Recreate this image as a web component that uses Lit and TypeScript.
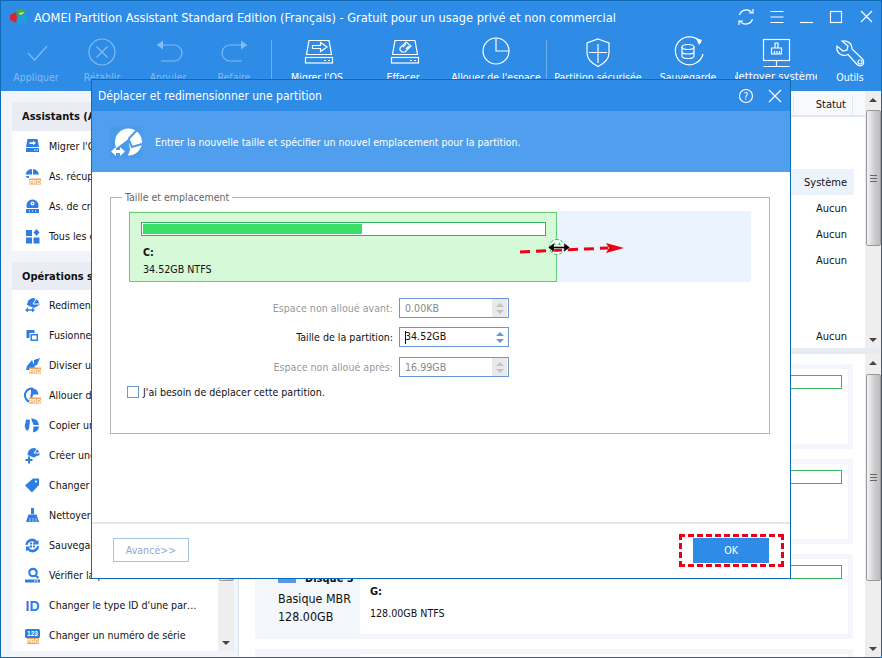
import { LitElement, html, css, svg } from "lit";
import { customElement } from "lit/decorators.js";

const pro = svg`<rect x="5" y="10.5" width="12" height="6" fill="#f4a460"/><text x="11" y="15.6" font-size="5.4" font-weight="700" fill="#fff" text-anchor="middle" font-family="'Liberation Sans',sans-serif">PRO</text>`;
const B = "#2f7de1";

const sideIcons: Record<string, unknown> = {
  migrate: svg`<path d="M3.5 1h10l1.5 8H2z" fill="${B}"/><path d="M5.5 4.2h3.6V2.8L12 5l-2.900 2.200V5.900H5.500z" fill="#fff"/><rect x="2" y="10" width="13" height="4" fill="${B}"/><path d="M10 12h1.500M12.500 12H14" stroke="#fff"/>`,
  recover: svg`<path d="M8 1a7 7 0 0 0-6.500 5.500H8zM9 1a7 7 0 0 1 6 5.500H9zM1.500 8H5v2H3.500z" fill="${B}"/>${pro}`,
  cd: svg`<path d="M3 10a6 6 0 1 1 11 0z" fill="${B}"/><circle cx="8.500" cy="5.500" r="2" fill="#fff"/><circle cx="8.500" cy="5.500" r=".8" fill="${B}"/><rect x="2" y="11" width="13" height="4" fill="${B}"/><path d="M5 13h1M8 13h1M11 13h1" stroke="#fff"/>`,
  tools: svg`<rect x="2" y="2" width="6" height="6" fill="${B}"/><rect x="2" y="9.500" width="6" height="6" fill="${B}"/><rect x="9.500" y="9.500" width="6" height="6" fill="${B}"/><path d="M12.500 1l3 3.500-3 3.500-3-3.500z" fill="${B}"/>`,
  resize: svg`<path d="M9 1a7 7 0 0 1 6.500 7L10 11 3 8a7 7 0 0 1 6-7z" fill="${B}"/><path d="M9 7l3-5M9 7h6" stroke="#fff"/><path d="M1 13l3-2.500v1.700h4v-1.700l3 2.500-3 2.500v-1.700H4v1.700z" fill="${B}"/>`,
  merge: svg`<rect x="2.500" y="3" width="8" height="8" fill="${B}"/><rect x="6" y="6.500" width="8.500" height="8" fill="${B}" stroke="#fff"/><rect x="8" y="8.500" width="4.500" height="4" fill="#fff"/>`,
  split: svg`<path d="M10 3l6-2-3 7-3 1zM3 9l5-6 3 7-3 3H2z" fill="${B}"/>${pro}`,
  alloc: svg`<path d="M8 1.500a6.800 6.800 0 1 0 5.500 10.500H7.500V8H8z" fill="none" stroke="${B}" stroke-width="2"/><path d="M9 1.500a6 6 0 0 1 5.500 6H9z" fill="${B}"/>${pro}`,
  copy: svg`<path d="M5 2.500A7 7 0 0 0 3 14l2-2 1-9z" fill="${B}"/><path d="M7 1.500A7 7 0 0 1 15 8H9.500zM9.500 9.500H15A7 7 0 0 1 9 15.500z" fill="${B}"/><path d="M1 5l2-3 2 2" fill="${B}"/>`,
  create: svg`<path d="M10 1a6.500 6.500 0 0 1 5.500 7l-6 2.500L3.500 8A6.500 6.500 0 0 1 10 1z" fill="${B}"/><path d="M10 6l3-4M10 6h5.500" stroke="#fff"/><path d="M4 9.500h2v2.500h2.500v2H6v2.500H4V14H1.500v-2H4z" fill="${B}"/>`,
  label: svg`<path d="M9 1.500h6v6.500l-7 7.500-7-7z" fill="${B}"/><circle cx="12" cy="4.500" r="1.100" fill="#fff"/>`,
  wipe: svg`<rect x="7" y="1" width="3" height="6" fill="${B}"/><path d="M4.500 7.500h8L15 15H2z" fill="${B}"/><path d="M6 11v4M9 11v4M12 11v4" stroke="#fff" stroke-width=".6"/>`,
  backup: svg`<path d="M1.500 8A6.500 6.500 0 0 1 13 4l1.500-1v4.500H10l1.500-1.500A4.500 4.500 0 0 0 3.500 8zM15 9A6.500 6.500 0 0 1 3.500 13L2 14.500V9.500h4.500L5 11a4.500 4.500 0 0 0 8-2z" fill="${B}"/><path d="M6 5.500h2v2H6zM9 5.500h2v2H9zM6 8.500h2v2H6zM9 8.500h2v2H9z" fill="${B}"/>`,
  check: svg`<circle cx="9" cy="5.500" r="3.700" fill="none" stroke="${B}" stroke-width="2.200"/><path d="M11.500 8.500l3 2.500" stroke="${B}" stroke-width="2.200"/><rect x="1" y="12.500" width="15" height="3" fill="${B}"/><path d="M10 14h1.500M12.500 14H14" stroke="#fff"/>`,
  id: svg`<text x="8.500" y="14" font-size="14" font-weight="700" fill="${B}" text-anchor="middle" font-family="'Liberation Sans',sans-serif">ID</text>`,
  serial: svg`<rect x="1" y="2" width="15" height="9" rx="1.500" fill="${B}"/><text x="8.500" y="9.300" font-size="6.500" font-weight="700" fill="#fff" text-anchor="middle" font-family="'Liberation Sans',sans-serif">123</text><rect x="3" y="11" width="12" height="6" fill="#f4a460"/><text x="9" y="16" font-size="5.400" font-weight="700" fill="#fff" text-anchor="middle" font-family="'Liberation Sans',sans-serif">PRO</text>`,
};

const tbIcons: Record<string, unknown> = {
  apply: svg`<path d="M14 22l6.500 7L33 15"/>`,
  undo_x: svg`<circle cx="22" cy="21" r="13"/><path d="M16.500 15.500l11 11M27.500 15.500l-11 11"/>`,
  undo: svg`<path d="M11 14h17a8 8 0 0 1 0 16H15"/><path d="M17 9.500l-6 4.500 6 4.500z" fill="currentColor" stroke="none"/>`,
  redo: svg`<path d="M35 14H18a8 8 0 0 0 0 16h12"/><path d="M29 9.500l6 4.500-6 4.500z" fill="currentColor" stroke="none"/>`,
  mig: svg`<path d="M14 9.500h20l2.500 14H11.500z"/><rect x="10.500" y="26.500" width="27" height="5.500"/><path d="M29 29.500h2M33 29.500h2"/><path d="M17.500 14.500h8v-3l6.500 4.500-6.500 4.500v-3h-8z"/>`,
  wipe: svg`<path d="M14 9.500h20l2.500 14H11.500z"/><rect x="10.500" y="26.500" width="27" height="5.500"/><path d="M29 29.500h2M33 29.500h2"/><path d="M19 17l6-6 5 4-6 6h-3l-2-2zM22 16l3-3M25 18l3-3"/>`,
  alloc: svg`<circle cx="22" cy="20" r="13"/><path d="M22 7v13h13"/>`,
  shield: svg`<path d="M22 8l11 4v10c0 7-6 11-11 13.500C17 33 11 29 11 22V12z"/><path d="M22 13v19M13 21.500h18"/>`,
  backup: svg`<path d="M35 12a14 14 0 1 0 2 11"/><path d="M30 7l6 2-3 5z" fill="#fff" stroke="none"/><ellipse cx="22" cy="16" rx="6" ry="2.500"/><path d="M16 16v9c0 3.300 12 3.300 12 0v-9M16 20.500c0 3.300 12 3.300 12 0"/>`,
  clean: svg`<rect x="9.500" y="8.500" width="26" height="21"/><path d="M22.500 29.500V35M9.500 35.500h26"/><path d="M21 12h3v5h-3zM17.500 17h10v6h-10zM20.500 23v-3M23 23v-3M25.500 23v-3"/>`,
  tools: svg`<path d="M14 10l6 5-1 4-4 1-6-5c-1 5 2 9.500 8 9.500l3-1 9 10c1.500 1.500 5 2 6 0s1-4-1-6L24 18c0-5.500-4.500-9-10-8z"/><circle cx="32" cy="31" r="2"/>`,
};

const tools = [
  { l: "Appliquer", i: "apply", w: 66, off: true },
  { l: "Rétablir", i: "undo_x", w: 66, off: true },
  { l: "Annuler", i: "undo", w: 66, off: true },
  { l: "Refaire", i: "redo", w: 66, off: true, sep: true },
  { l: "Migrer l'OS", i: "mig", w: 84 },
  { l: "Effacer", i: "wipe", w: 88 },
  { l: "Allouer de l'espace", i: "alloc", w: 98, sep: true },
  { l: "Partition sécurisée", i: "shield", w: 102 },
  { l: "Sauvegarde", i: "backup", w: 78 },
  { l: "Nettoyer système", i: "clean", w: 98, clip: true },
  { l: "Outils", i: "tools", w: 50 },
];

const wizards = [
  ["migrate", "Migrer l'OS vers disque SSD"],
  ["recover", "As. récupération de partition"],
  ["cd", "As. de création de CD bootable"],
  ["tools", "Tous les outils"],
];
const ops = [
  ["resize", "Redimensionner la partition"],
  ["merge", "Fusionner les partitions"],
  ["split", "Diviser une partition"],
  ["alloc", "Allouer de l'espace libre"],
  ["copy", "Copier une partition"],
  ["create", "Créer une partition"],
  ["label", "Changer la lettre de lecteur"],
  ["wipe", "Nettoyer la partition"],
  ["backup", "Sauvegarder la partition"],
  ["check", "Vérifier la partition"],
  ["id", "Changer le type ID d'une par…"],
  ["serial", "Changer un numéro de série"],
];
const rows = [
  { s: "", h: 26 }, { s: "", h: 26 },
  { s: "Système", h: 26, hl: true },
  { s: "Aucun", h: 26 }, { s: "Aucun", h: 26 }, { s: "Aucun", h: 26 },
  { s: "", h: 26 }, { s: "", h: 24 },
  { s: "Aucun", h: 26 },
];
const disks = [
  { n: "Disque 1", k: "Basique MBR", z: "60.00GB", p: "C:", d: "34.52GB NTFS" },
  { n: "Disque 2", k: "Basique MBR", z: "128.00GB", p: "F:", d: "128.00GB NTFS" },
  { n: "Disque 3", k: "Basique MBR", z: "128.00GB", p: "G:", d: "128.00GB NTFS" },
  { n: "Disque 4", k: "Basique MBR", z: "128.00GB", p: "H:", d: "128.00GB NTFS" },
];

@customElement("app-root")
export class AppRoot extends LitElement {
  static styles = css`
    :host { display: block; width: 882px; height: 658px; font-family: "DejaVu Sans Condensed", "Liberation Sans", sans-serif; font-size: 10.6px; color: #111; }
    * { box-sizing: border-box; }
    .win { position: relative; width: 882px; height: 658px; border: 1px solid #0f6ab5; background: #f1f5fb; overflow: hidden; display: flex; flex-direction: column; }
    .head { height: 90px; background: #2e8be6; color: #fff; flex: none; }
    .titlebar { height: 32px; display: flex; align-items: center; padding-left: 7px; }
    .app-title { margin-left: 6px; font-size: 12.7px; flex: 1; white-space: nowrap; }
    .wctl { display: flex; align-items: center; }
    .wctl svg { display: block; fill: none; stroke: #fff; stroke-width: 1.2; }
    .c-menu { margin-left: 13px; }
    .c-min, .c-max { margin-left: 15px; }
    .c-close { margin-left: 17px; margin-right: 7px; }
    .toolbar { display: flex; padding-left: 2px; height: 58px; }
    .tool { flex: none; display: flex; flex-direction: column; align-items: center; color: #fff; overflow: hidden; white-space: nowrap; }
    .tool.off { color: #82bcf2; }
    .tool svg { width: 44px; height: 44px; fill: none; stroke: currentColor; stroke-width: 1.2; flex: none; margin: -2px 0 -8px; }
    .tool span { font-size: 10.5px; line-height: 16px; margin-top: 2px; }
    .tool.clip { margin: 0 8px; }
    .tool.clip span { font-size: 11.2px; }
    .sep { flex: none; width: 1px; height: 40px; margin: 7px 3px 0 4px; background: #6fb0ef; }
    .sep.b { margin: 7px 0 0 1px; }

    .content { flex: 1; display: flex; min-height: 0; }
    .side { width: 238px; flex: none; padding: 11px 4px 6px 11px; border-right: 1px solid #dce3ee; display: flex; flex-direction: column; gap: 11px; }
    .panel { background: #fff; }
    .panel-b { flex: 1; min-height: 0; display: flex; flex-direction: column; }
    .ph { height: 29px; background: #e9edf3; font-weight: 700; font-size: 11px; display: flex; align-items: center; padding-left: 10px; white-space: nowrap; overflow: hidden; }
    .panel-b .ph { height: 28px; }
    .li { height: 30px; display: flex; align-items: center; padding-left: 12px; gap: 8px; white-space: nowrap; overflow: hidden; }
    .li svg { width: 17px; height: 17px; flex: none; }
    .list-wrap { flex: 1; display: flex; min-height: 0; }
    .list-wrap .pitems { flex: 1; min-width: 0; }

    .sb { width: 16px; flex: none; background: #eeeeee; display: flex; flex-direction: column; align-items: center; }
    .sb-up, .sb-dn { width: 0; height: 0; border-left: 4px solid transparent; border-right: 4px solid transparent; flex: none; }
    .sb-up { border-bottom: 4px solid #444; margin-top: 7px; }
    .sb-dn { border-top: 4px solid #444; margin-bottom: 6px; }
    .thumb { width: 15px; flex: none; border: 1px solid #9a9a9a; border-radius: 2px; background: linear-gradient(90deg, #f4f4f4, #cfcfd2 55%, #bdbdc2); display: flex; align-items: center; justify-content: center; }
    .grip { width: 7px; height: 7px; border-top: 1px solid #666; border-bottom: 1px solid #666; position: relative; }
    .grip::after { content: ""; position: absolute; left: 0; right: 0; top: 2px; height: 1px; background: #666; }
    .sb-fill { flex: 1; }

    .main { flex: 1; min-width: 0; display: flex; flex-direction: column; background: #fff; }
    .top { height: 257px; flex: none; display: flex; }
    .table { flex: 1; min-width: 0; background: #fff; }
    .thead { height: 26px; background: #f7f9fc; border-bottom: 2px solid #e0e7f1; display: flex; justify-content: flex-end; align-items: center; padding: 3px 12px 0 0; font-size: 11px; }
    .thead span { padding: 0 6px 0 22px; border-right: 1px solid #e3e7ee; border-left: 1px solid #e3e7ee; line-height: 20px; }
    .tr { display: flex; justify-content: flex-end; align-items: center; padding-right: 7px; margin-right: 11px; font-size: 11px; }
    .tr.hl { background: #ebf3fc; }
    .split { height: 6px; flex: none; background: #e6ebf2; }
    .bottom { flex: 1; min-height: 0; display: flex; }
    .disks { flex: 1; min-width: 0; overflow: hidden; padding: 10px 12px 0 16px; display: flex; flex-direction: column; gap: 10px; }
    .card { height: 85px; flex: none; background: #f3f6fb; display: flex; padding: 5px 5px 5px 0; }
    .cl { width: 105px; flex: none; padding: 11px 0 0 23px; white-space: nowrap; }
    .cl .dn { display: flex; align-items: center; gap: 9px; font-weight: 700; font-size: 11px; height: 16px; }
    .cl .dn i { display: block; width: 18px; height: 9px; background: #5a96e6; }
    .cl p { margin: 0; font-size: 12.4px; line-height: 18px; }
    .cl .kk { margin-top: 4px; }
    .cr { flex: 1; background: #fff; padding: 6px 6px 0 10px; }
    .cbar { height: 14px; border: 1px solid #35b85c; }
    .cn { font-weight: 700; font-size: 11px; margin-top: 6px; line-height: 14px; }
    .cd { margin-top: 7px; line-height: 14px; }

    .dlg { position: absolute; left: 90px; top: 78px; width: 700px; height: 500px; background: #fff; border: 1px solid #0f6ab5; display: flex; flex-direction: column; }
    .dt { height: 31px; flex: none; background: #2e8be6; color: #fff; display: flex; align-items: center; padding-left: 6px; font-size: 12px; }
    .dt .tt { flex: 1; }
    .dt svg { display: block; fill: none; stroke: #fff; stroke-width: 1.2; }
    .d-x { margin-left: 14px; margin-right: 8px; }
    .dh { height: 61px; flex: none; background: #509fee; color: #fff; display: flex; align-items: center; padding-left: 18px; gap: 13px; font-size: 10.5px; }
    .dh svg { width: 32px; height: 32px; display: block; }
    .db { flex: 1; min-height: 0; padding: 17px 20px 0 18px; }
    fieldset { margin: 0; height: 245px; padding: 6px 18px 0 18px; border: 1px solid #b4b4b4; min-width: 0; }
    legend { color: #666; padding: 0 3px; margin-left: -7px; line-height: 16px; font-size: 10.5px; }
    .track { height: 71px; background: #ebf3fe; display: flex; width: 622px; padding-top: 1px; }
    .pt { width: 428px; height: 70px; background: #d6fad8; border: 1px solid #66cc77; padding: 9px 10px 0 11px; }
    .pb { height: 14px; border: 1px solid #34b35a; background: #fff; padding: 1px; }
    .pb i { display: block; height: 100%; width: 54.5%; background: #38de67; }
    .pn { font-weight: 700; margin: 9px 0 0 2px; line-height: 14px; }
    .pd { margin: 3px 0 0 2px; line-height: 14px; }
    .form { width: 380px; margin-top: 16px; display: flex; flex-direction: column; gap: 9px; }
    .fr { display: flex; justify-content: flex-end; align-items: center; gap: 6px; height: 20px; }
    .fr:last-child { margin-top: 1px; }
    .fr label { color: #999; }
    .fr.on label { color: #111; }
    .inp { width: 110px; height: 20px; border: 1px solid #6a96d8; display: flex; align-items: center; padding: 0 0 0 5px; color: #888; justify-content: space-between; background: #fff; }
    .fr.on .inp { color: #111; }
    .caret { display: inline-block; width: 1px; height: 13px; background: #111; margin-right: -1px; vertical-align: middle; }
    .spin { width: 15px; height: 18px; display: flex; flex-direction: column; align-items: center; justify-content: center; gap: 3px; background: #e9e9e9; margin-right: 1px; }
    .fr.on .spin { background: #fff; }
    .spin b { width: 0; height: 0; border-left: 4px solid transparent; border-right: 4px solid transparent; }
    .spin b:first-child { border-bottom: 4px solid #c4c4c4; }
    .spin b:last-child { border-top: 4px solid #c4c4c4; }
    .fr.on .spin b:first-child { border-bottom-color: #6a96d8; }
    .fr.on .spin b:last-child { border-top-color: #6a96d8; }
    .chk { display: flex; align-items: center; gap: 4px; margin: 9px 0 0 -2px; }
    .chk i { display: block; width: 12px; height: 12px; border: 1px solid #6a96d8; }
    .df { height: 56px; flex: none; border-top: 2px solid #e6e6e6; display: flex; justify-content: space-between; align-items: center; padding: 0 21px 2px 21px; }
    .adv { width: 76px; height: 24px; border: 1px solid #a6c3ea; color: #8fa9cf; display: flex; align-items: center; justify-content: center; }
    .okw { position: relative; }
    .okw::after { content: ""; position: absolute; left: -14px; right: -15px; top: -4px; bottom: -4px; border: 3px dashed #e6001a; }
    .ok { width: 76px; height: 25px; background: #2e8be6; color: #fff; display: flex; align-items: center; justify-content: center; }
    .over { position: absolute; left: 0; top: 0; pointer-events: none; }
  `;

  private sb(h: number, thumbTop: number, thumbH: number) {
    return html`<div class="sb" style="height:${h}px">
      <div class="sb-up"></div>
      <div class="thumb" style="margin-top:${thumbTop}px;height:${thumbH}px"><div class="grip"></div></div>
      <div class="sb-fill"></div>
      <div class="sb-dn"></div>
    </div>`;
  }

  private item(k: string, t: string) {
    return html`<div class="li"><svg viewBox="0 0 17 17">${sideIcons[k]}</svg><span>${t}</span></div>`;
  }

  render() {
    return html`<div class="win">
      <div class="head">
        <div class="titlebar">
          <svg width="20" height="18" viewBox="0 0 20 18">
            <path d="M2 7l6-3 1 5-1 6-6-3z" fill="#d8262c"/>
            <path d="M8 2c4-1.500 9-.500 10 2l-8 3z" fill="#38b54a"/>
            <path d="M10 9l9-3v7c-2 3-6 4-9 3z" fill="#1f9fd8"/>
            <path d="M11 5l5-1-1 2-3 1z" fill="#d7ef4a"/>
          </svg>
          <span class="app-title">AOMEI Partition Assistant Standard Edition (Français) - Gratuit pour un usage privé et non commercial</span>
          <div class="wctl">
            <svg width="20" height="20" viewBox="0 0 20 20"><path d="M3.500 8A7 7 0 0 1 16 6M16.500 12A7 7 0 0 1 4 14"/><path d="M13 6h4V2M7 14H3v4"/></svg>
            <svg class="c-menu" width="16" height="14" viewBox="0 0 16 14"><path d="M1.500 1.500h13M1.500 7h13M1.500 12.500h13"/></svg>
            <svg class="c-min" width="14" height="14" viewBox="0 0 14 14"><path d="M0 12.500h13"/></svg>
            <svg class="c-max" width="14" height="14" viewBox="0 0 14 14"><rect x="1.500" y="1.500" width="11" height="11"/></svg>
            <svg class="c-close" width="14" height="14" viewBox="0 0 14 14"><path d="M1 1l11 11M12 1L1 12"/></svg>
          </div>
        </div>
        <div class="toolbar">
          ${tools.map((t) => html`
            <div class="tool ${t.off ? "off" : ""} ${t.clip ? "clip" : ""}" style="width:${t.clip ? t.w - 16 : t.w}px">
              <svg viewBox="0 0 44 44">${tbIcons[t.i]}</svg><span>${t.l}</span>
            </div>
            ${t.sep ? html`<div class="sep ${t.off ? "" : "b"}"></div>` : ""}
          `)}
        </div>
      </div>

      <div class="content">
        <div class="side">
          <div class="panel">
            <div class="ph">Assistants (Aide)</div>
            <div>${wizards.map(([k, t]) => this.item(k, t))}</div>
          </div>
          <div class="panel panel-b">
            <div class="ph">Opérations sur la partition</div>
            <div class="list-wrap">
              <div class="pitems">${ops.map(([k, t]) => this.item(k, t))}</div>
              ${this.sb(361, 8, 272)}
            </div>
          </div>
        </div>

        <div class="main">
          <div class="top">
            <div class="table">
              <div class="thead"><span>Statut</span></div>
              ${rows.map((r) => html`<div class="tr ${r.hl ? "hl" : ""}" style="height:${r.h}px">${r.s}</div>`)}
            </div>
            ${this.sb(257, 8, 136)}
          </div>
          <div class="split"></div>
          <div class="bottom">
            <div class="disks">
              ${disks.map((d) => html`<div class="card">
                <div class="cl">
                  <div class="dn"><i></i><span>${d.n}</span></div>
                  <p class="kk">${d.k}</p><p>${d.z}</p>
                </div>
                <div class="cr">
                  <div class="cbar"></div>
                  <div class="cn">${d.p}</div>
                  <div class="cd">${d.d}</div>
                </div>
              </div>`)}
            </div>
            ${this.sb(303, 9, 207)}
          </div>
        </div>
      </div>

      <div class="dlg">
        <div class="dt">
          <span class="tt">Déplacer et redimensionner une partition</span>
          <svg width="16" height="16" viewBox="0 0 16 16"><circle cx="8" cy="8" r="6.500"/><text x="8" y="11.500" font-size="10" fill="#fff" stroke="none" text-anchor="middle">?</text></svg>
          <svg class="d-x" width="14" height="14" viewBox="0 0 14 14"><path d="M1 1l12 12M13 1L1 13"/></svg>
        </div>
        <div class="dh">
          <svg viewBox="0 0 32 32">
            <rect width="32" height="32" fill="#4a9aea"/>
            <circle cx="18.500" cy="16" r="13.500" fill="#fff"/>
            <path d="M18.500 13L5 23l-5 9h17l3-8z" fill="#4a9aea"/>
            <path d="M18.500 13L27 4M18.500 13l3.500 8 10-3" fill="none" stroke="#4a9aea" stroke-width="2"/>
            <path d="M1 25.500l5-4.500v3h4v-3l5 4.500-5 4.500v-3H6v3z" fill="#fff"/>
          </svg>
          <span>Entrer la nouvelle taille et spécifier un nouvel emplacement pour la partition.</span>
        </div>
        <div class="db">
          <fieldset>
            <legend>Taille et emplacement</legend>
            <div class="track">
              <div class="pt">
                <div class="pb"><i></i></div>
                <div class="pn">C:</div>
                <div class="pd">34.52GB NTFS</div>
              </div>
            </div>
            <div class="form">
              <div class="fr"><label>Espace non alloué avant:</label><div class="inp"><span>0.00KB</span><div class="spin"><b></b><b></b></div></div></div>
              <div class="fr on"><label>Taille de la partition:</label><div class="inp"><span><i class="caret"></i>34.52GB</span><div class="spin"><b></b><b></b></div></div></div>
              <div class="fr"><label>Espace non alloué après:</label><div class="inp"><span>16.99GB</span><div class="spin"><b></b><b></b></div></div></div>
            </div>
            <div class="chk"><i></i><span>J'ai besoin de déplacer cette partition.</span></div>
          </fieldset>
        </div>
        <div class="df">
          <div class="adv">Avancé&gt;&gt;</div>
          <div class="okw"><div class="ok">OK</div></div>
        </div>
      </div>

      <svg class="over" width="882" height="658" viewBox="1 1 882 658">
        <circle cx="557" cy="247" r="7.500" fill="#fff" stroke="#3fb85e" stroke-dasharray="4 1.500"/>
        <path d="M553 245l1.500-3 1.500 3zM558 245l1.500-3 1.500 3z" fill="#3fb85e"/>
        <path d="M520 252L608 248" stroke="#f00010" stroke-width="3" stroke-dasharray="10 6" fill="none"/>
        <path d="M606 243l18 5-18 5 3-5z" fill="#f00010"/>
        <path d="M548 247.500l6-4.500v3.500h10V243l6 4.500-6 4.500v-3.500h-10V252z" fill="#000" stroke="#fff" stroke-width=".4"/>
      </svg>
    </div>`;
  }
}
